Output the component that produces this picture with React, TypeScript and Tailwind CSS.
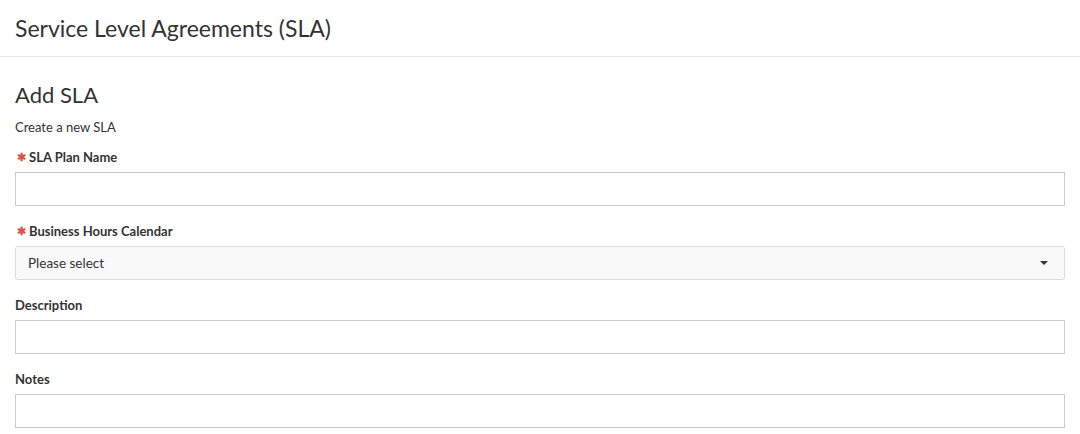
const fields = [
  { label: "SLA Plan Name", required: true, type: "input" },
  { label: "Business Hours Calendar", required: true, type: "select" },
  { label: "Description", required: false, type: "input" },
  { label: "Notes", required: false, type: "input" },
];

const App: React.FC = () => {
  return (
    <div className="min-h-screen bg-white text-[#333] font-['Lato','Noto_Sans',sans-serif]">
      <header className="h-[57px] border-b border-[#e5e5e5] px-[15px] flex items-center">
        <h1 className="text-[23px] font-normal text-[#333]">Service Level Agreements (SLA)</h1>
      </header>
      <main className="px-[15px] pt-[22px]">
        <h2 className="text-[22px] leading-[32px] font-normal">Add SLA</h2>
        <p className="text-[13px] mt-[7px] leading-[18px]">Create a new SLA</p>
        <div className="mt-[12px] flex flex-col gap-[16px]">
          {fields.map((f) => (
            <div key={f.label}>
              <label className="flex items-center gap-[3px] text-[13px] font-bold leading-[18px] mb-[6px]">
                {f.required && <span className="ml-[2px] text-[#d9534f] text-[11px] font-bold">✱</span>}
                {f.label}
              </label>
              {f.type === "select" ? (
                <div className="h-[34px] border border-[#ddd] rounded-[3px] bg-[#f9f9f9] flex items-center justify-between px-[12px]">
                  <span className="text-[13.5px]">Please select</span>
                  <svg width="8" height="4" viewBox="0 0 8 4" className="mr-[4px]">
                    <path d="M0 0h8L4 4z" fill="#333" />
                  </svg>
                </div>
              ) : (
                <input className="block w-full h-[34px] border border-[#ccc] bg-white px-[12px] outline-none" />
              )}
            </div>
          ))}
        </div>
      </main>
    </div>
  );
};

export default App;
